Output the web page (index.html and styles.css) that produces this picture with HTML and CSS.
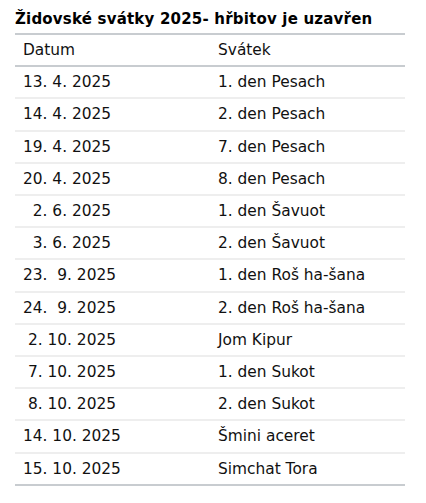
FILE: index.html
```html
<!DOCTYPE html>
<html lang="cs">
<head>
<meta charset="utf-8">
<title>Židovské svátky 2025</title>
<link rel="stylesheet" href="styles.css">
</head>
<body>
<div class="wrap">
  <h2 class="title">Židovské svátky 2025- hřbitov je uzavřen</h2>
  <table class="holidays">
    <thead>
      <tr><th>Datum</th><th>Svátek</th></tr>
    </thead>
    <tbody>
      <tr><td>13. 4. 2025</td><td>1. den Pesach</td></tr>
      <tr><td>14. 4. 2025</td><td>2. den Pesach</td></tr>
      <tr><td>19. 4. 2025</td><td>7. den Pesach</td></tr>
      <tr><td>20. 4. 2025</td><td>8. den Pesach</td></tr>
      <tr><td>  2. 6. 2025</td><td>1. den Šavuot</td></tr>
      <tr><td>  3. 6. 2025</td><td>2. den Šavuot</td></tr>
      <tr><td>23.  9. 2025</td><td>1. den Roš ha-šana</td></tr>
      <tr><td>24.  9. 2025</td><td>2. den Roš ha-šana</td></tr>
      <tr><td> 2. 10. 2025</td><td>Jom Kipur</td></tr>
      <tr><td> 7. 10. 2025</td><td>1. den Sukot</td></tr>
      <tr><td> 8. 10. 2025</td><td>2. den Sukot</td></tr>
      <tr><td>14. 10. 2025</td><td>Šmini aceret</td></tr>
      <tr><td>15. 10. 2025</td><td>Simchat Tora</td></tr>
    </tbody>
  </table>
</div>
</body>
</html>
```
FILE: styles.css
```css
html, body {
  margin: 0;
  padding: 0;
  background: #ffffff;
}

body {
  font-family: "DejaVu Sans", Verdana, sans-serif;
  color: #111111;
}

.wrap {
  padding: 9px 21px 0 15px;
  width: 390px;
}

.title {
  margin: 0 0 4px 0;
  font-size: 15px;
  letter-spacing: 0.2px;
  line-height: 20px;
  font-weight: bold;
  color: #000000;
}

.holidays {
  width: 390px;
  border-collapse: collapse;
  border-top: 2px solid #c8ccd0;
  border-bottom: 2px solid #c8ccd0;
  font-size: 15.4px;
}

.holidays th,
.holidays td {
  width: 50%;
  text-align: left;
  font-weight: normal;
  padding: 6px 8px;
  line-height: 18.2px;
  white-space: pre;
}

.holidays thead th {
  border-bottom: 2px solid #c8ccd0;
}

.holidays tbody td {
  border-bottom: 2px solid #eeeeee;
}

.holidays tbody tr:last-child td {
  border-bottom: 2px solid #c8ccd0;
}
```
